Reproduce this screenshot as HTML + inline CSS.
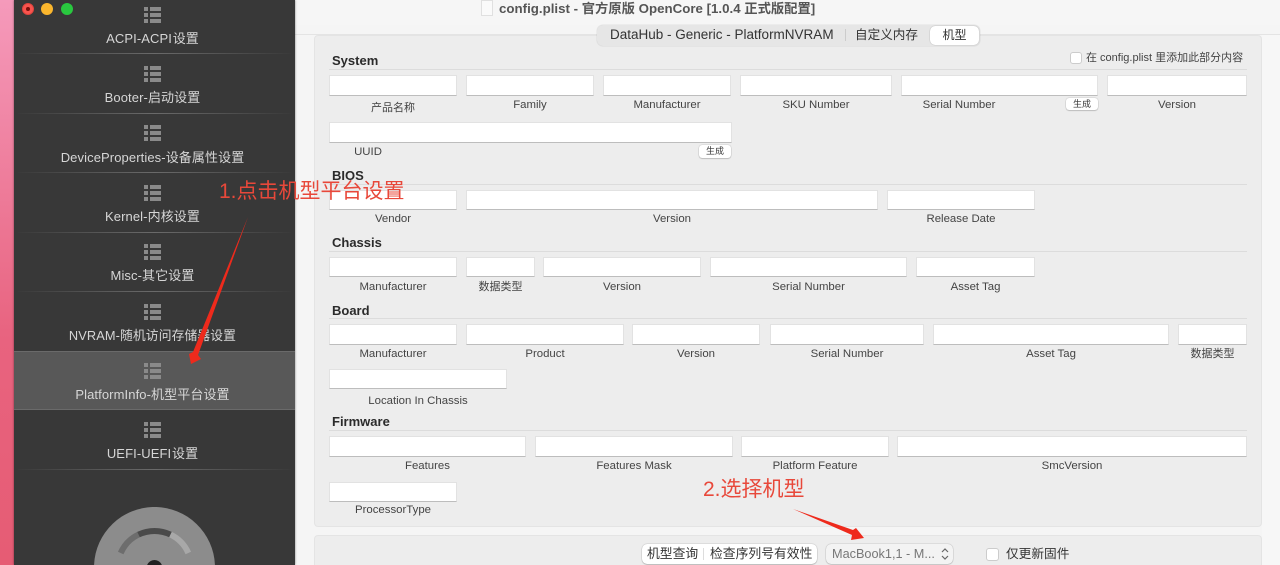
<!DOCTYPE html>
<html lang="zh"><head><meta charset="utf-8">
<style>
html,body{margin:0;padding:0;width:1280px;height:565px;overflow:hidden}
body{position:relative;background:#f5f5f5;font-family:"Liberation Sans","Noto Sans CJK SC",sans-serif;color:#333}
div,span{position:absolute;box-sizing:border-box}
#bg{left:0;top:0;width:14px;height:565px;background:linear-gradient(#f59abb,#e8637f 60%,#e65c74)}
#side{left:14px;top:0;width:281px;height:565px;background:#383838;box-shadow:0 0 2px rgba(0,0,0,.5);overflow:hidden}
.dot{width:12px;height:12px;border-radius:50%;top:3px}
.it{left:0;width:277px;text-align:center;color:#d6d6d6;font-size:13px;letter-spacing:.1px;line-height:16px;white-space:nowrap}
.sep{left:4px;width:273px;height:1px;background:linear-gradient(90deg,#3a3a3a,#6a6a6a 50%,#3a3a3a)}
.ic{left:130px;width:17px;height:16px}
.ic i{position:absolute;background:#8a8a8a;height:4px}
.panel{left:314px;width:948px;background:#ededed;border:1px solid #e4e4e4;border-radius:4px}
.f{background:#fff;border:1px solid #e2e2e2;border-bottom:1px solid #bdbdbd}
.l{font-size:11.4px;line-height:13px;text-align:center;color:#444;white-space:nowrap;margin-top:1px}
.h{left:332px;font-size:13px;font-weight:bold;line-height:15px;color:#2b2b2b}
.r{left:329px;width:918px;height:1px;background:#dcdcdc}
.b{background:#fff;border-radius:3px;font-size:9px;line-height:12px;text-align:center;color:#333;box-shadow:0 0 1px rgba(0,0,0,.4),0 1px 1px rgba(0,0,0,.15)}
.red{color:#e8483a;font-size:21px;line-height:26px;white-space:nowrap}
</style></head><body>
<div id="bg"></div>
<div style="left:295px;top:0;width:985px;height:25px;background:#f6f6f6"></div>
<div style="left:295px;top:34px;width:985px;height:1px;background:#e4e4e4"></div>
<div style="left:1262px;top:35px;width:18px;height:530px;background:#f7f7f7"></div>

<div id="side">
<div class="ic" style="top:7px"><i style="left:0;top:0;width:4px"></i><i style="left:6px;top:0;width:11px"></i><i style="left:0;top:6px;width:4px"></i><i style="left:6px;top:6px;width:11px"></i><i style="left:0;top:12px;width:4px"></i><i style="left:6px;top:12px;width:11px"></i></div>
<div class="it" style="top:31px;word-spacing:-3px">ACPI-ACPI 设置</div><div class="sep" style="top:53px"></div>
<div class="ic" style="top:66px"><i style="left:0;top:0;width:4px"></i><i style="left:6px;top:0;width:11px"></i><i style="left:0;top:6px;width:4px"></i><i style="left:6px;top:6px;width:11px"></i><i style="left:0;top:12px;width:4px"></i><i style="left:6px;top:12px;width:11px"></i></div>
<div class="it" style="top:90px">Booter-启动设置</div><div class="sep" style="top:113px"></div>
<div class="ic" style="top:125px"><i style="left:0;top:0;width:4px"></i><i style="left:6px;top:0;width:11px"></i><i style="left:0;top:6px;width:4px"></i><i style="left:6px;top:6px;width:11px"></i><i style="left:0;top:12px;width:4px"></i><i style="left:6px;top:12px;width:11px"></i></div>
<div class="it" style="top:150px">DeviceProperties-设备属性设置</div><div class="sep" style="top:172px"></div>
<div class="ic" style="top:185px"><i style="left:0;top:0;width:4px"></i><i style="left:6px;top:0;width:11px"></i><i style="left:0;top:6px;width:4px"></i><i style="left:6px;top:6px;width:11px"></i><i style="left:0;top:12px;width:4px"></i><i style="left:6px;top:12px;width:11px"></i></div>
<div class="it" style="top:209px">Kernel-内核设置</div><div class="sep" style="top:232px"></div>
<div class="ic" style="top:244px"><i style="left:0;top:0;width:4px"></i><i style="left:6px;top:0;width:11px"></i><i style="left:0;top:6px;width:4px"></i><i style="left:6px;top:6px;width:11px"></i><i style="left:0;top:12px;width:4px"></i><i style="left:6px;top:12px;width:11px"></i></div>
<div class="it" style="top:268px">Misc-其它设置</div><div class="sep" style="top:291px"></div>
<div class="ic" style="top:304px"><i style="left:0;top:0;width:4px"></i><i style="left:6px;top:0;width:11px"></i><i style="left:0;top:6px;width:4px"></i><i style="left:6px;top:6px;width:11px"></i><i style="left:0;top:12px;width:4px"></i><i style="left:6px;top:12px;width:11px"></i></div>
<div class="it" style="top:328px;font-size:12.8px">NVRAM-随机访问存储器设置</div>
<div style="left:0;top:351px;width:281px;height:59px;background:#585858;border-top:1px solid #6a6a6a;border-bottom:1px solid #6a6a6a"></div>
<div class="ic" style="top:363px"><i style="left:0;top:0;width:4px"></i><i style="left:6px;top:0;width:11px"></i><i style="left:0;top:6px;width:4px"></i><i style="left:6px;top:6px;width:11px"></i><i style="left:0;top:12px;width:4px"></i><i style="left:6px;top:12px;width:11px"></i></div>
<div class="it" style="top:387px">PlatformInfo-机型平台设置</div>
<div class="ic" style="top:422px"><i style="left:0;top:0;width:4px"></i><i style="left:6px;top:0;width:11px"></i><i style="left:0;top:6px;width:4px"></i><i style="left:6px;top:6px;width:11px"></i><i style="left:0;top:12px;width:4px"></i><i style="left:6px;top:12px;width:11px"></i></div>
<div class="it" style="top:446px;word-spacing:-3px">UEFI-UEFI 设置</div><div class="sep" style="top:469px"></div>
<svg style="position:absolute;left:80px;top:507px" width="121" height="58"><path d="M0.05 58A60.500 60.500 0 0 1 120.950 58Z" fill="#8c8c8c"/><path d="M26.700 46A37 37 0 0 1 44.500 27.600" fill="none" stroke="#6d6d6d" stroke-width="6"/><path d="M44.500 27.600A37 37 0 0 1 76.500 27.600" fill="none" stroke="#4a4a4a" stroke-width="6"/><path d="M76.500 27.600A37 37 0 0 1 94.300 46" fill="none" stroke="#a8a8a8" stroke-width="6"/><path d="M53.100 58A8 8 0 0 1 67.900 58Z" fill="#222"/></svg>
</div>
<div class="dot" style="left:22px;background:#f9544e;border:1px solid #e0443e"></div>
<div style="left:26px;top:7px;width:4px;height:4px;border-radius:50%;background:#7a0f0b"></div>
<div class="dot" style="left:41px;background:#fbb62d"></div>
<div class="dot" style="left:61px;background:#29c83f"></div>

<div style="left:481px;top:0;width:12px;height:16px;background:#fafafa;border:1px solid #e0e0e0"></div>
<div style="left:499px;top:0;font-size:13.3px;font-weight:bold;line-height:17px;color:#555;white-space:nowrap">config.plist - 官方原版 OpenCore [1.0.4 正式版配置]</div>

<div class="panel" style="top:35px;height:492px"></div>
<div class="panel" style="top:535px;height:30px;border-bottom:0;border-radius:4px 4px 0 0"></div>

<div style="left:597px;top:25px;width:383px;height:21px;background:#e6e6e6;border-radius:6px;box-shadow:0 0 1px rgba(0,0,0,.25)"></div>
<div style="left:610px;top:27px;font-size:13.500px;line-height:16px;color:#333;white-space:nowrap">DataHub - Generic - PlatformNVRAM</div>
<div style="left:845px;top:29px;width:1px;height:12px;background:#ccc"></div>
<div style="left:855px;top:27px;font-size:12.600px;line-height:16px;color:#333;white-space:nowrap">自定义内存</div>
<div style="left:930px;top:26px;width:49px;height:19px;background:#fff;border-radius:5px;box-shadow:0 0 1px rgba(0,0,0,.4);font-size:12px;line-height:18px;text-align:center;color:#333">机型</div>

<div class="h" style="top:53px">System</div><div class="r" style="top:69px"></div>
<div style="left:1070px;top:52px;width:12px;height:12px;background:#fff;border:1px solid #ccc;border-radius:3px"></div>
<div style="left:1086px;top:51px;font-size:11px;line-height:14px;color:#444;white-space:nowrap">在 config.plist 里添加此部分内容</div>

<div class="f" style="left:329px;top:75px;width:128px;height:21px"></div>
<div class="f" style="left:466px;top:75px;width:128px;height:21px"></div>
<div class="f" style="left:603px;top:75px;width:128px;height:21px"></div>
<div class="f" style="left:740px;top:75px;width:152px;height:21px"></div>
<div class="f" style="left:901px;top:75px;width:197px;height:21px"></div>
<div class="f" style="left:1107px;top:75px;width:140px;height:21px"></div>
<div class="l" style="left:329px;top:101px;width:128px;font-size:11px">产品名称</div>
<div class="l" style="left:466px;top:98px;width:128px">Family</div>
<div class="l" style="left:603px;top:98px;width:128px">Manufacturer</div>
<div class="l" style="left:740px;top:98px;width:152px">SKU Number</div>
<div class="l" style="left:860px;top:98px;width:198px">Serial Number</div>
<div class="b" style="left:1066px;top:98px;width:32px;height:12px">生成</div>
<div class="l" style="left:1107px;top:98px;width:140px">Version</div>
<div class="f" style="left:329px;top:122px;width:403px;height:21px"></div>
<div class="l" style="left:329px;top:145px;width:78px">UUID</div>
<div class="b" style="left:699px;top:145px;width:32px;height:13px">生成</div>

<div class="h" style="top:168px">BIOS</div><div class="r" style="top:184px"></div>
<div class="f" style="left:329px;top:190px;width:128px;height:20px"></div>
<div class="f" style="left:466px;top:190px;width:412px;height:20px"></div>
<div class="f" style="left:887px;top:190px;width:148px;height:20px"></div>
<div class="l" style="left:329px;top:212px;width:128px">Vendor</div>
<div class="l" style="left:466px;top:212px;width:412px">Version</div>
<div class="l" style="left:887px;top:212px;width:148px">Release Date</div>

<div class="h" style="top:235px">Chassis</div><div class="r" style="top:251px"></div>
<div class="f" style="left:329px;top:257px;width:128px;height:20px"></div>
<div class="f" style="left:466px;top:257px;width:69px;height:20px"></div>
<div class="f" style="left:543px;top:257px;width:158px;height:20px"></div>
<div class="f" style="left:710px;top:257px;width:197px;height:20px"></div>
<div class="f" style="left:916px;top:257px;width:119px;height:20px"></div>
<div class="l" style="left:329px;top:280px;width:128px">Manufacturer</div>
<div class="l" style="left:466px;top:280px;width:69px;font-size:11px">数据类型</div>
<div class="l" style="left:543px;top:280px;width:158px">Version</div>
<div class="l" style="left:710px;top:280px;width:197px">Serial Number</div>
<div class="l" style="left:916px;top:280px;width:119px">Asset Tag</div>

<div class="h" style="top:303px">Board</div><div class="r" style="top:318px"></div>
<div class="f" style="left:329px;top:324px;width:128px;height:21px"></div>
<div class="f" style="left:466px;top:324px;width:158px;height:21px"></div>
<div class="f" style="left:632px;top:324px;width:128px;height:21px"></div>
<div class="f" style="left:770px;top:324px;width:154px;height:21px"></div>
<div class="f" style="left:933px;top:324px;width:236px;height:21px"></div>
<div class="f" style="left:1178px;top:324px;width:69px;height:21px"></div>
<div class="l" style="left:329px;top:347px;width:128px">Manufacturer</div>
<div class="l" style="left:466px;top:347px;width:158px">Product</div>
<div class="l" style="left:632px;top:347px;width:128px">Version</div>
<div class="l" style="left:770px;top:347px;width:154px">Serial Number</div>
<div class="l" style="left:933px;top:347px;width:236px">Asset Tag</div>
<div class="l" style="left:1178px;top:347px;width:69px;font-size:11px">数据类型</div>
<div class="f" style="left:329px;top:369px;width:178px;height:20px"></div>
<div class="l" style="left:329px;top:394px;width:178px">Location In Chassis</div>

<div class="h" style="top:414px">Firmware</div><div class="r" style="top:430px"></div>
<div class="f" style="left:329px;top:436px;width:197px;height:21px"></div>
<div class="f" style="left:535px;top:436px;width:198px;height:21px"></div>
<div class="f" style="left:741px;top:436px;width:148px;height:21px"></div>
<div class="f" style="left:897px;top:436px;width:350px;height:21px"></div>
<div class="l" style="left:329px;top:459px;width:197px">Features</div>
<div class="l" style="left:535px;top:459px;width:198px">Features Mask</div>
<div class="l" style="left:741px;top:459px;width:148px">Platform Feature</div>
<div class="l" style="left:897px;top:459px;width:350px">SmcVersion</div>
<div class="f" style="left:329px;top:482px;width:128px;height:20px"></div>
<div class="l" style="left:329px;top:503px;width:128px">ProcessorType</div>

<div style="left:642px;top:544px;width:175px;height:20px;background:#fff;border-radius:5px;box-shadow:0 0 1px rgba(0,0,0,.45),0 1px 1px rgba(0,0,0,.15)"></div>
<div style="left:647px;top:546px;font-size:12.800px;line-height:16px;color:#333;white-space:nowrap">机型查询</div>
<div style="left:703px;top:548px;width:1px;height:12px;background:#ddd"></div>
<div style="left:710px;top:546px;font-size:12.800px;line-height:16px;color:#333;white-space:nowrap">检查序列号有效性</div>
<div style="left:826px;top:544px;width:127px;height:20px;background:#f3f3f3;border-radius:5px;box-shadow:0 0 1px rgba(0,0,0,.45),0 1px 1px rgba(0,0,0,.1)"></div>
<div style="left:832px;top:546px;font-size:12.700px;line-height:16px;color:#777;white-space:nowrap">MacBook1,1 - M...</div>
<svg style="position:absolute;left:940px;top:547px" width="10" height="14"><path d="M2 5L5 2L8 5M2 9L5 12L8 9" fill="none" stroke="#666" stroke-width="1.200"/></svg>
<div style="left:986px;top:548px;width:13px;height:13px;background:#fff;border:1px solid #ccc;border-radius:3px"></div>
<div style="left:1006px;top:546px;font-size:12.700px;line-height:16px;color:#333;white-space:nowrap">仅更新固件</div>

<div class="red" style="left:219px;top:179px">1.点击机型平台设置</div>
<div class="red" style="left:703px;top:477px">2.选择机型</div>
<svg style="position:absolute;left:0;top:0" width="1280" height="565"><polygon points="248,217 198,355 201,359 191,364 189,354 193,352" fill="#ee2a1c"/><polygon points="793,509 853,530 856,528 864,538 851,540 852,535" fill="#ee2a1c"/></svg>
</body></html>
